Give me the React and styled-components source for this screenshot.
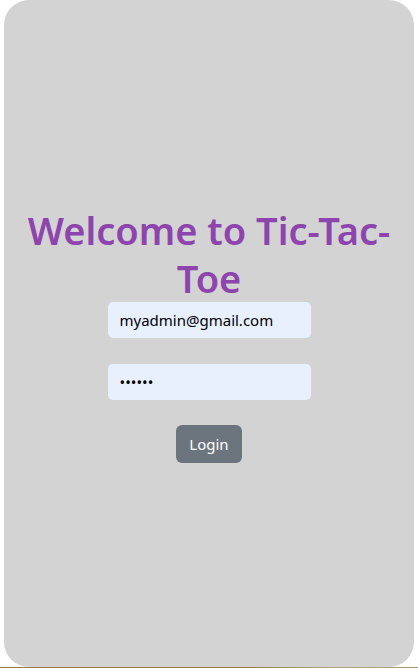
import React from "react";
import styled, { createGlobalStyle } from "styled-components";

const Global = createGlobalStyle`
  html, body { margin: 0; padding: 0; background: #ffffff; }
  body { font-family: "Noto Sans", "Open Sans", sans-serif; }
  * { box-sizing: border-box; }
`;

const Page = styled.div`
  display: flex;
  flex-direction: column;
  height: 668px;
`;

const Card = styled.main`
  margin: 0 4px;
  height: 667px;
  border-radius: 25px;
  background: #d3d3d3;
  display: flex;
  flex-direction: column;
  align-items: center;
  justify-content: center;
  padding-top: 1px;
`;

const Strip = styled.div`
  height: 1px;
  background: linear-gradient(90deg, #a07a3c 0%, #9c7a3a 60%, #b0a47a 80%, #a89a6c 100%);
`;

const Title = styled.h1`
  margin: 0;
  padding: 0 12px;
  font-family: "Noto Sans", sans-serif;
  font-size: 38px;
  font-weight: 600;
  line-height: 48px;
  color: #8e44ad;
  text-align: center;
`;

const Form = styled.form`
  display: flex;
  flex-direction: column;
  align-items: center;
`;

const Field = styled.input`
  width: 203px;
  height: 36px;
  margin-bottom: ${(p) => p.$gap}px;
  padding: 0 12px;
  border: none;
  border-radius: 5px;
  background: #e8f0fe;
  color: #000;
  font-family: "Noto Sans", sans-serif;
  font-size: 15px;
  outline: none;
`;

const Button = styled.button`
  width: 66px;
  height: 38px;
  border: none;
  border-radius: 6px;
  background: #6c757d;
  color: #fff;
  font-family: "Noto Sans", sans-serif;
  font-size: 15px;
  padding: 0;
`;

export default function App() {
  return (
    <Page>
      <Global />
      <Card>
        <Title>Welcome to Tic-Tac-Toe</Title>
        <Form onSubmit={(e) => e.preventDefault()}>
          <Field type="email" defaultValue="myadmin@gmail.com" $gap={26} />
          <Field type="password" defaultValue="123456" $gap={25} />
          <Button type="submit">Login</Button>
        </Form>
      </Card>
      <Strip />
    </Page>
  );
}
